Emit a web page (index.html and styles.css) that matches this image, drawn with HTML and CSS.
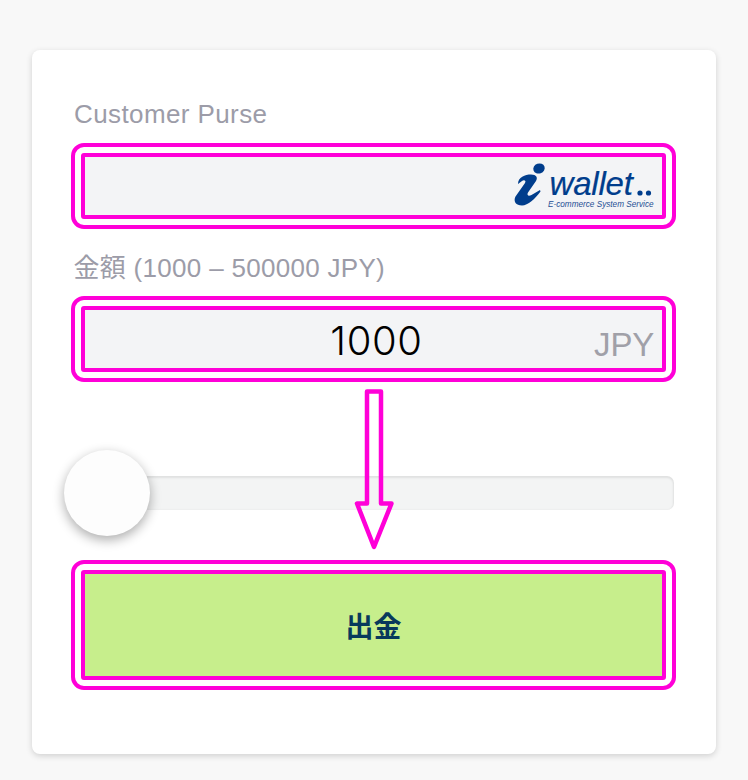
FILE: index.html
```html
<!DOCTYPE html>
<html lang="ja">
<head>
<meta charset="utf-8">
<title>出金</title>
<link rel="stylesheet" href="styles.css">
</head>
<body>
<main class="card">
  <div class="label">Customer Purse</div>
  <div class="ring">
    <div class="well well-logo">
      <svg class="logo" width="142" height="52" viewBox="0 0 142 52">
        <g transform="translate(-513 -160)">
          <ellipse cx="539" cy="168.500" rx="5.800" ry="5" transform="rotate(-20 539 168.500)" fill="#003d8c"/>
          <path d="M518 184 C518 177 525 174.500 531 174.500 C536.500 174.500 538 177.500 536 181 L528 192.500 C526.500 195.500 528.500 196.500 531.500 195 L540 190 L540.500 191.500 C535 199 528 205.500 522 205.500 C516 205.500 513 201.500 515.500 196.500 L525 183 C526.500 180.500 524 179.500 522 181 Z" fill="#003d8c"/>
          <text class="logo-word" x="549.500" y="195">wallet</text>
          <circle cx="640" cy="193" r="2.600" fill="#003d8c"/>
          <circle cx="648.500" cy="193" r="2.600" fill="#003d8c"/>
          <text class="logo-tag" x="548" y="207">E-commerce System Service</text>
        </g>
      </svg>
    </div>
  </div>
  <div class="label label-next">金額 (1000 – 500000 JPY)</div>
  <div class="ring">
    <div class="well well-amount">
      <span class="amount">1000</span>
      <span class="unit">JPY</span>
    </div>
  </div>
  <div class="slider">
    <div class="track"></div>
    <div class="thumb"></div>
  </div>
  <div class="ring ring-button">
    <button class="submit" type="button">出金</button>
  </div>
  <svg class="arrow" width="46" height="164" viewBox="0 0 46 164">
    <path d="M14 3.500 H28 V115.500 H38.500 L21 159 L4 115.500 H14 Z" fill="none" stroke="#ff00d8" stroke-width="4.500" stroke-linejoin="round"/>
  </svg>
</main>
</body>
</html>
```
FILE: styles.css
```css
* {
  box-sizing: border-box;
}

html,
body {
  margin: 0;
  height: 100%;
}

body {
  background: #f8f8f8;
  padding: 50px 32px 26px;
  font-family: "Liberation Sans", "Noto Sans CJK JP", sans-serif;
  overflow: hidden;
}

.card {
  position: relative;
  width: 684px;
  height: 704px;
  padding: 47px 40px 0 39px;
  background: #fff;
  border-radius: 8px;
  box-shadow: 0 2px 6px rgba(0, 0, 0, 0.16);
}

.label {
  height: 34px;
  margin-bottom: 12px;
  font-size: 26px;
  line-height: 34px;
  letter-spacing: 0.4px;
  color: #9c9ca8;
  padding-left: 3px;
}

.label-next {
  margin-top: 22px;
  margin-bottom: 11px;
  letter-spacing: 0.3px;
  padding-left: 2.500px;
}

.ring {
  height: 86px;
  padding: 6px;
  border: 4px solid #ff00d8;
  border-radius: 13px;
}

.well {
  height: 66px;
  border: 4px solid #ff00d8;
  border-radius: 3px;
  background: #f3f4f6;
  display: flex;
  align-items: center;
}

.well-logo {
  justify-content: flex-end;
}

.logo {
  margin-right: 7px;
  overflow: visible;
}

.logo-word {
  font-size: 33px;
  font-style: italic;
  fill: #003d8c;
  stroke: #003d8c;
  stroke-width: 0.2px;
  letter-spacing: -0.2px;
}

.logo-tag {
  font-size: 8.200px;
  font-style: italic;
  fill: #1f4f94;
}

.well-amount {
  position: relative;
  justify-content: center;
}

.amount {
  font-family: "Inter", "Liberation Sans", sans-serif;
  font-size: 40px;
  font-weight: 300;
  letter-spacing: 0.600px;
  color: #000;
  position: relative;
  top: 1px;
  left: 3px;
}

.unit {
  position: absolute;
  right: 8px;
  bottom: 4px;
  font-size: 33px;
  letter-spacing: -0.2px;
  color: #a0a0a8;
}

.slider {
  position: relative;
  display: flex;
  align-items: center;
  height: 86px;
  margin: 68px 2px 24px 3px;
}

.track {
  width: 100%;
  height: 34px;
  background: #f3f4f4;
  border-radius: 7px;
  box-shadow: inset 0 1px 2px 1px rgba(0, 0, 0, 0.08);
}

.thumb {
  position: absolute;
  left: -10px;
  top: 0;
  width: 86px;
  height: 86px;
  border-radius: 50%;
  background: #fdfdfd;
  box-shadow: 0 4px 12px rgba(0, 0, 0, 0.33);
}

.ring-button {
  height: 130px;
}

.submit {
  display: block;
  width: 100%;
  height: 110px;
  border: 4px solid #ff00d8;
  border-radius: 3px;
  background: #c7ee8c;
  color: #07395c;
  font-family: "Liberation Sans", "Noto Sans CJK JP", sans-serif;
  font-size: 28px;
  font-weight: 700;
}

.arrow {
  position: absolute;
  left: 321px;
  top: 338px;
}
```
